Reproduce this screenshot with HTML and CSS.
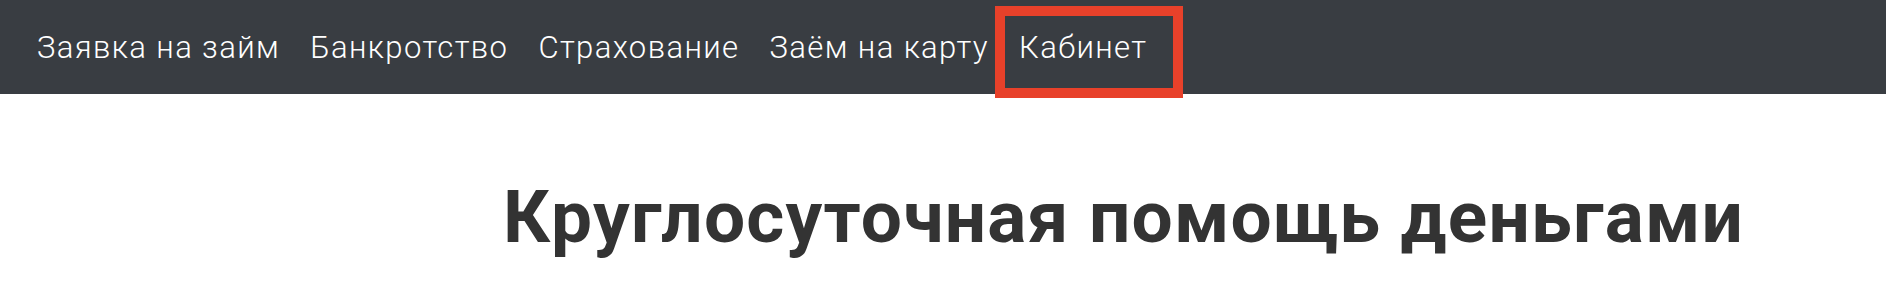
FILE: index.html
```html
<!DOCTYPE html>
<html lang="ru">
<head>
    <meta charset="UTF-8" />
    <meta name="viewport" content="width=device-width, initial-scale=1.0" />
    <title>Круглосуточная помощь деньгами</title>
    <link rel="stylesheet" href="styles.css">
</head>
<body>

    <header>
        <nav>
            <a href="#">Заявка на займ</a>
            <a href="#">Банкротство</a>
            <a href="#">Страхование</a>
            <a href="#">Заём на карту</a>
            <a href="#" class="marked">Кабинет</a>
        </nav>
    </header>

    <main class="hero">
        <h1>Круглосуточная помощь деньгами</h1>
    </main>

</body>
</html>
```

FILE: styles.css
```css
:root {
    --dark: #393d42;
    --text: #333;
    --white: #fff;
    --mark: #e8412a;
}

*, *::after {
    box-sizing: border-box;
}

body {
    font-family: Roboto, 'Noto Sans', sans-serif;
    background: var(--white);
    color: var(--text);
    margin: 0;
    padding: 0;
}

header {
    background: var(--dark);
    height: 94px;
    padding: 0 0 0 22px;
}

nav {
    display: flex;
    align-items: center;
    height: 100%;
}

    nav a {
        color: var(--white);
        text-decoration: none;
        font-weight: 300;
        font-size: 31px;
        letter-spacing: 1.4px;
        padding: 0 15px;
        position: relative;
    }

        nav a.marked::after {
            content: '';
            position: absolute;
            left: -9px;
            right: -21px;
            top: -23px;
            height: 92px;
            border: 10px solid var(--mark);
        }

.hero {
    padding: 0 0 0 503px;
}

h1 {
    margin: 0;
    padding-top: 80px;
    font-size: 73px;
    font-weight: 700;
    letter-spacing: 1.2px;
    line-height: 1.2;
}
```
